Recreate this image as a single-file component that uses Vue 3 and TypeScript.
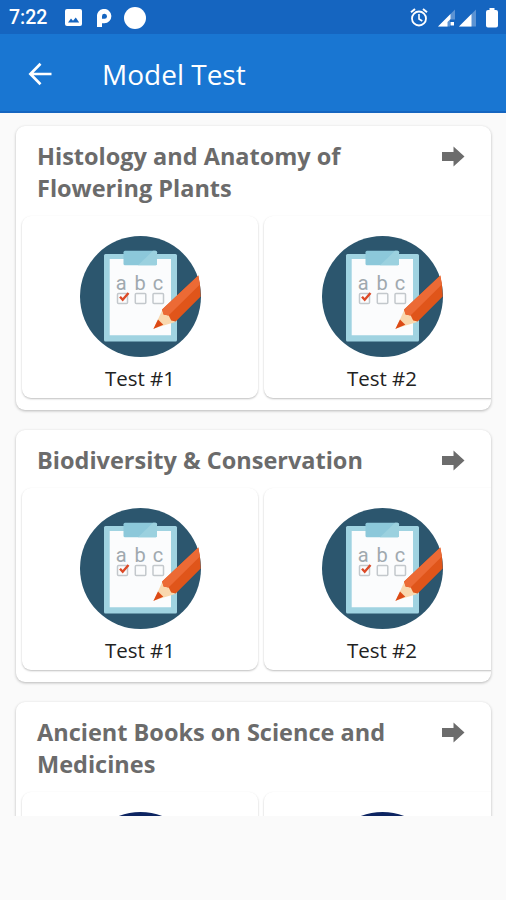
<script setup lang="ts">
interface Topic {
  title: string
  tests: string[]
  collapsed?: boolean
}

const topics: Topic[] = [
  { title: 'Histology and Anatomy of Flowering Plants', tests: ['Test #1', 'Test #2'] },
  { title: 'Biodiversity & Conservation', tests: ['Test #1', 'Test #2'] },
  { title: 'Ancient Books on Science and Medicines', tests: ['Test #1', 'Test #2'], collapsed: true },
]
</script>

<template>
  <div class="screen">
    <header class="status">
      <span class="clock">7:22</span>
      <svg class="picture" width="17" height="17" viewBox="0 0 17 17">
        <rect width="17" height="17" rx="2" fill="#fff" />
        <path d="M3 13.500 6 9.500l2 2.300 2.800-3.300 3.400 5z" fill="#1565c0" />
      </svg>
      <svg class="letter" width="15" height="18" viewBox="0 0 15 18">
        <path d="M0 18V8A7.200 7.200 0 1 1 7.300 14.300H5V18zM5 9.800H7.300A2.500 2.500 0 1 0 5 7.300z" fill="#fff" fill-rule="evenodd" />
      </svg>
      <span class="dot"></span>
      <svg class="alarm" width="18" height="19" viewBox="0 0 18 19" fill="none" stroke="#fff">
        <circle cx="9" cy="10.500" r="7" stroke-width="1.800" />
        <path d="M1 4.200 5 1M17 4.200 13 1" stroke-width="2" />
        <path d="M9 6v5l3.300 2" stroke-width="1.600" />
      </svg>
      <svg class="signal" width="17" height="18" viewBox="0 0 17 18">
        <path d="M0 17.500 17 .5v10h-5v7z" fill="#5c93d3" />
        <path d="M0 17.500 12.500 5v5L9.500 13v4.500z" fill="#fff" />
        <path d="M12.500 13h3.500v3.500h-3.500z" fill="#fff" />
      </svg>
      <svg class="signal second" width="17" height="18" viewBox="0 0 17 18">
        <path d="M0 17.500 17 .5v17z" fill="#5c93d3" />
        <path d="M0 17.500 12.500 5v12.500z" fill="#fff" />
      </svg>
      <svg class="battery" width="12" height="20" viewBox="0 0 12 20">
        <path d="M3.500 0h5v2H10q2 0 2 2v13.500q0 2-2 2H2q-2 0-2-2V4q0-2 2-2h1.500z" fill="#fff" />
      </svg>
    </header>

    <div class="toolbar">
      <svg class="back" width="24" height="24" viewBox="0 0 24 24" fill="none" stroke="#fff" stroke-width="2.700">
        <path d="M23.500 12H3M12.500 1.800 2.400 12l10.100 10.200" />
      </svg>
      <h1>Model Test</h1>
    </div>

    <main class="list">
      <section v-for="topic in topics" :key="topic.title" class="card">
        <div class="heading">
          <h2>{{ topic.title }}</h2>
          <svg class="arrow" width="23" height="21" viewBox="0 0 23 21">
            <path d="M0 6h11.500V.5L22.500 10.500l-11 10V15H0z" fill="#6c6c6c" />
          </svg>
        </div>
        <div class="tests">
          <article v-for="test in topic.tests" :key="test" class="test">
            <svg width="121" height="121" viewBox="0 0 121 121">
              <circle cx="60.500" cy="60.500" r="60.500" :fill="topic.collapsed ? '#0c2461' : '#2c566e'" />
              <template v-if="!topic.collapsed">
                <rect x="24" y="18" width="73" height="87.500" rx="1.500" fill="#a0d3e1" />
                <path d="M29.700 23H91v76.300H29.700z" fill="#fbfcfd" />
                <rect x="43.500" y="14.800" width="33.500" height="14.500" rx="1.500" fill="#8cc8da" />
                <path d="M58 29.300 73 14.800h2.500q1.500 0 1.500 1.500v11.500q0 1.500-1.500 1.500z" fill="#9bd1df" />
                <g class="letters">
                  <text x="41.300" y="54">a</text>
                  <text x="60" y="54">b</text>
                  <text x="78" y="54">c</text>
                </g>
                <g fill="none" stroke="#c3c8cc" stroke-width="1.500">
                  <rect x="37.500" y="57.500" width="10" height="10" rx="1" />
                  <rect x="55.300" y="57.500" width="10.500" height="10" rx="1" />
                  <rect x="73" y="57.500" width="10.500" height="10" rx="1" />
                </g>
                <path d="m40 60.800 2.700 3L48.500 57" fill="none" stroke="#dc4a27" stroke-width="2.400" />
                <path d="M82.500 73.500 73.800 92.500l21.500-6.500z" fill="#f9d8ae" />
                <path d="m78 83.500-4.700 9.500 10-4.300z" fill="#dc4a16" />
                <path d="M118.300 39.500q2.400 11 2.400 21l-25 25-4.500-1-2.500-5-5-1-1.500-5z" fill="#e0551a" />
                <path d="M118.300 39.500q1.100 5 1.600 9L88.500 79.500l-5-1-1.500-5z" fill="#ec6a35" />
              </template>
            </svg>
            <span v-if="!topic.collapsed">{{ test }}</span>
          </article>
        </div>
      </section>
    </main>
  </div>
</template>

<style>
body {
  margin: 0;
  background: #fafafa;
}
</style>

<style scoped>
.screen {
  width: 506px;
  height: 900px;
  overflow: hidden;
  background: #fafafa;
  font-family: "Open Sans", "Noto Sans", sans-serif;
}
.status {
  display: flex;
  align-items: center;
  box-sizing: border-box;
  height: 34px;
  padding: 1px 8px 0 9px;
  background: #1565c0;
  color: #fff;
}
.clock {
  width: 56px;
  font: 500 19.500px/34px Roboto, sans-serif;
}
.letter {
  margin-left: 15px;
}
.dot {
  width: 22px;
  height: 22px;
  margin-left: 12px;
  border-radius: 50%;
  background: #fff;
}
.alarm {
  margin-left: auto;
}
.signal {
  margin-left: 10px;
}
.second {
  margin-left: 4px;
}
.battery {
  margin-left: 10px;
}
.toolbar {
  display: flex;
  align-items: center;
  box-sizing: border-box;
  height: 79px;
  padding-left: 28px;
  background: #1976d2;
  border-bottom: 2px solid #1565c0;
}
.back {
  margin-top: 2px;
}
h1 {
  margin: 3px 0 0 50px;
  color: #fff;
  font-size: 28px;
  font-weight: 400;
  line-height: 40px;
}
.list {
  display: flex;
  flex-direction: column;
  gap: 20px;
  box-sizing: border-box;
  height: 703px;
  padding: 13px 15px 0 16px;
  overflow: hidden;
}
.card {
  flex: none;
  box-sizing: border-box;
  padding: 14px 0 12px;
  border-radius: 9px;
  background: #fff;
  box-shadow: 0 1px 3px rgba(0, 0, 0, .27);
  overflow: hidden;
}
.heading {
  display: flex;
  justify-content: space-between;
  align-items: flex-start;
  padding: 0 26px 12px 21px;
}
h2 {
  width: 370px;
  margin: 0;
  color: #6b6b6b;
  font-size: 23.500px;
  font-weight: 700;
  line-height: 32px;
}
.arrow {
  margin-top: 6px;
}
.tests {
  display: flex;
  gap: 6px;
  padding-left: 6px;
}
.test {
  display: flex;
  flex: none;
  flex-direction: column;
  align-items: center;
  box-sizing: border-box;
  width: 236px;
  height: 182px;
  padding-top: 20px;
  border-radius: 9px;
  background: #fff;
  box-shadow: 0 1px 2px rgba(0, 0, 0, .25);
}
.test span {
  margin-top: 5px;
  color: #222;
  font-size: 20.500px;
  line-height: 32px;
}
.letters {
  fill: #a0a9af;
  font: 20px Roboto, sans-serif;
  text-anchor: middle;
}
</style>
